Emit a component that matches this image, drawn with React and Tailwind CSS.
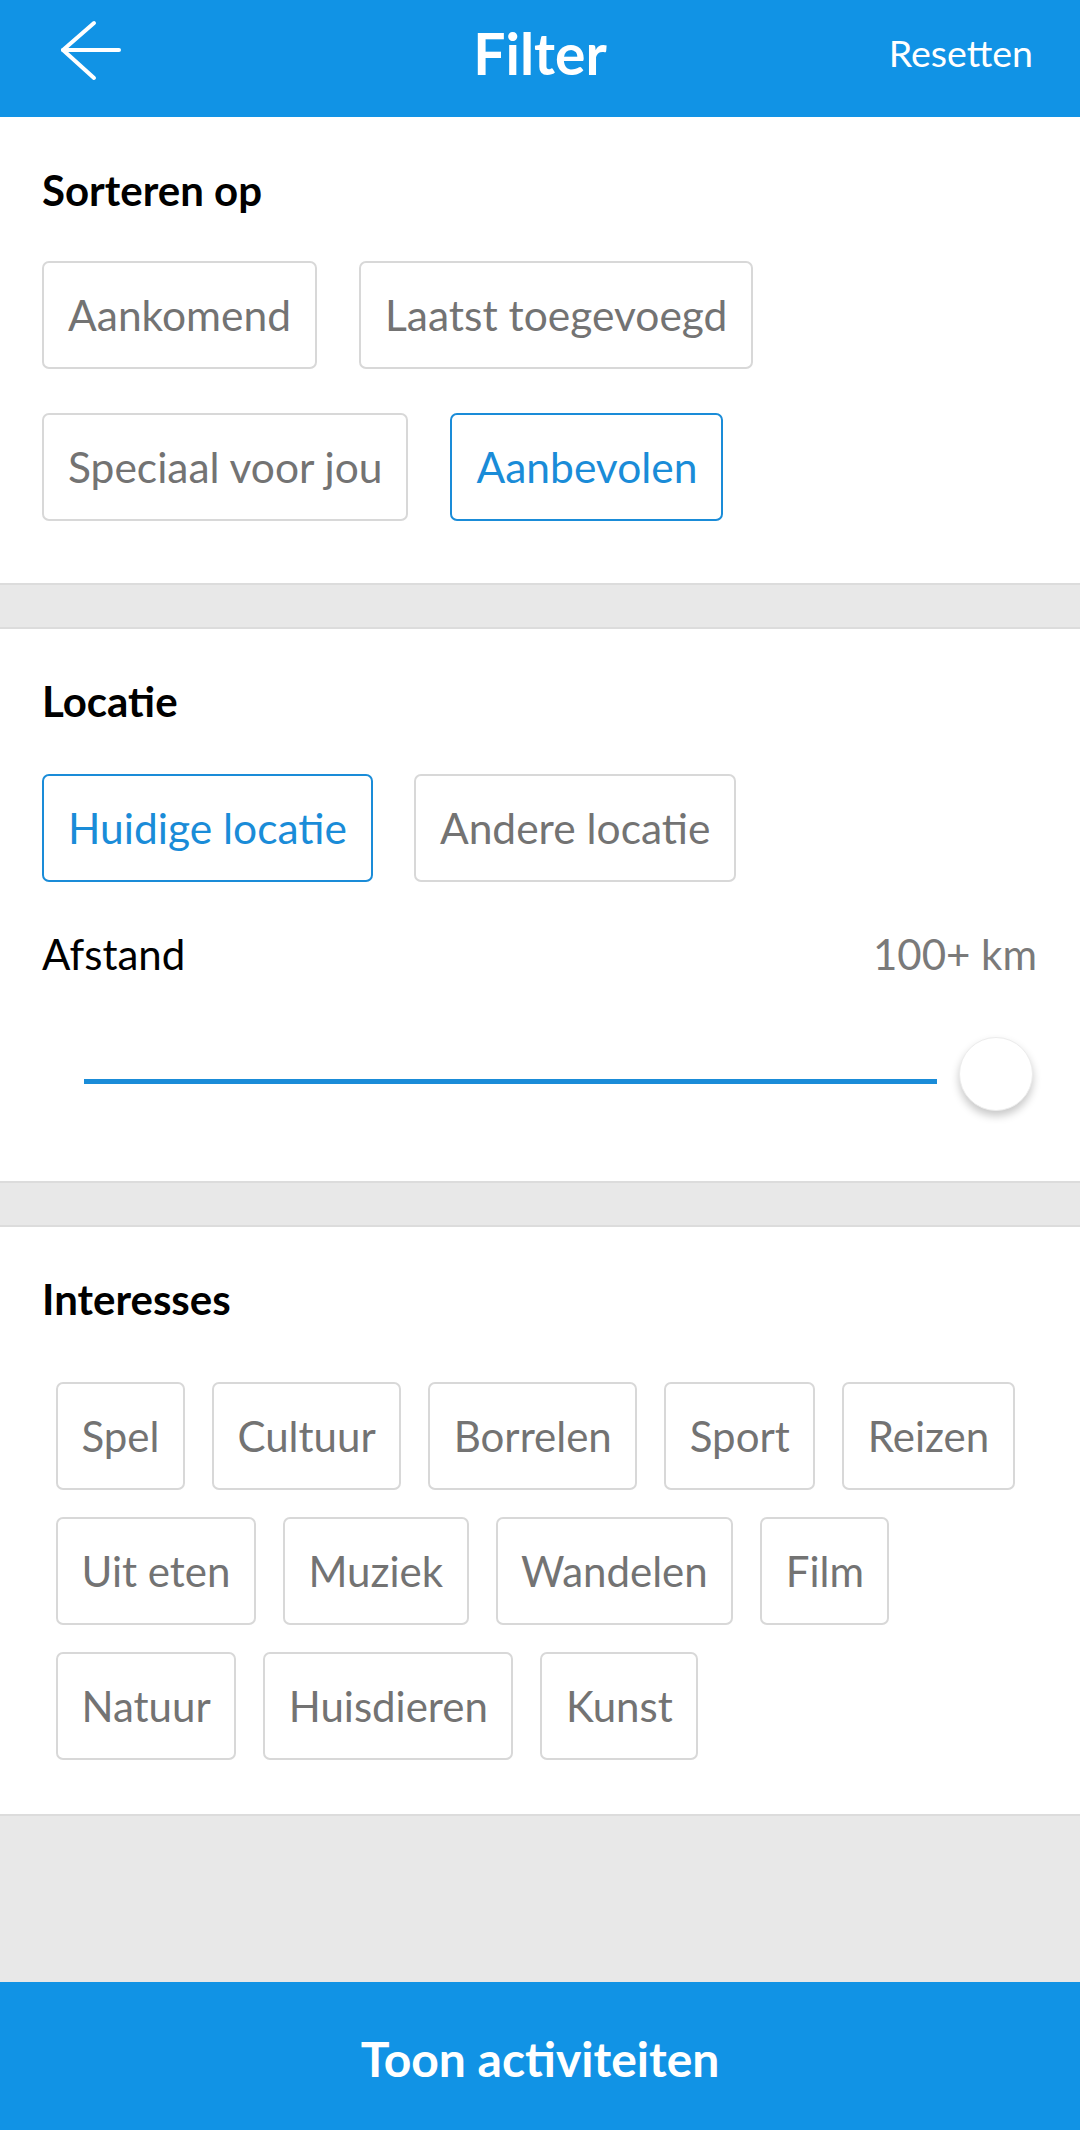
import { useState } from 'react';

const font = { fontFamily: 'Lato, "Open Sans", sans-serif' };

const Chip = ({ label, active, onClick, small }) => (
  <button
    onClick={onClick}
    className={`h-[108px] rounded-[7px] border-2 bg-white flex items-center leading-none ${
      small ? 'px-[23.5px] text-[42px]' : 'px-[24px] text-[42.5px]'
    } ${active ? 'border-[#1a8cd8] text-[#1a8cd8]' : 'border-[#d8d8d8] text-[#737373]'}`}
  >
    {label}
  </button>
);

const Band = () => <div className="h-[46px] shrink-0 bg-[#e8e8e8] border-y-2 border-[#dcdcdc]" />;

const interests = [
  'Spel', 'Cultuur', 'Borrelen', 'Sport', 'Reizen',
  'Uit eten', 'Muziek', 'Wandelen', 'Film',
  'Natuur', 'Huisdieren', 'Kunst',
];

export default function App() {
  const [sort, setSort] = useState('Aanbevolen');
  const [loc, setLoc] = useState('Huidige locatie');
  const [picked, setPicked] = useState([]);

  const toggle = (name) =>
    setPicked((p) => (p.includes(name) ? p.filter((x) => x !== name) : [...p, name]));

  const sortChip = (s) => <Chip key={s} label={s} active={sort === s} onClick={() => setSort(s)} />;

  return (
    <div style={font} className="w-[1080px] h-[2130px] flex flex-col bg-[#e8e8e8]">
      {/* Header */}
      <header className="h-[117px] shrink-0 bg-[#1193e5] relative flex items-center justify-center pb-[10px]">
        <button className="absolute left-[58px] top-[19px] w-[66px] h-[62px] flex items-center justify-center">
          <svg width="66" height="62" viewBox="0 0 66 62" fill="none" stroke="white" strokeWidth="4" strokeLinecap="round" strokeLinejoin="round">
            <path d="M5 31 H61" />
            <path d="M36 4 L5 31 L36 59" />
          </svg>
        </button>
        <h1 className="text-white font-bold text-[57px] leading-none">Filter</h1>
        <button className="absolute right-[47px] top-[34px] text-white text-[37.5px] leading-none">Resetten</button>
      </header>

      {/* Sorteren op */}
      <section className="bg-white pt-[52px] pb-[62px] px-[42px]">
        <h2 className="text-[42px] font-bold leading-none text-black">Sorteren op</h2>
        <div className="mt-[50px] flex flex-col gap-y-[44px]">
          <div className="flex gap-x-[42px]">
            {['Aankomend', 'Laatst toegevoegd'].map(sortChip)}
          </div>
          <div className="flex gap-x-[42px]">
            {['Speciaal voor jou', 'Aanbevolen'].map(sortChip)}
          </div>
        </div>
      </section>

      <Band />

      {/* Locatie */}
      <section className="bg-white pt-[51px] pb-[70px] px-[42px]">
        <h2 className="text-[42px] font-bold leading-none text-black">Locatie</h2>
        <div className="mt-[52px] flex gap-x-[41px]">
          {['Huidige locatie', 'Andere locatie'].map((s) => (
            <Chip key={s} label={s} active={loc === s} onClick={() => setLoc(s)} />
          ))}
        </div>
        <div className="mt-[51px] flex items-center justify-between text-[42px] leading-none">
          <span className="text-black">Afstand</span>
          <span className="text-[#7a7a7a] pr-[1px]">100+ km</span>
        </div>
        <div className="mt-[62px] ml-[42px] flex items-start gap-[22px]">
          <div className="mt-[42px] w-[853px] h-[5px] bg-[#1a8cd8]" />
          <div className="w-[74px] h-[74px] rounded-full bg-white border border-[#ececec] shadow-[0_5px_8px_rgba(0,0,0,0.22)]" />
        </div>
      </section>

      <Band />

      {/* Interesses */}
      <section className="bg-white pt-[51px] pb-[54px] px-[42px]">
        <h2 className="text-[42px] font-bold leading-none text-black">Interesses</h2>
        <div className="mt-[62px] ml-[14px] w-[980px] flex flex-wrap gap-[27px]">
          {interests.map((s) => (
            <Chip key={s} small label={s} active={picked.includes(s)} onClick={() => toggle(s)} />
          ))}
        </div>
      </section>

      <div className="flex-1 border-t-2 border-[#dcdcdc]" />

      <button className="h-[148px] shrink-0 bg-[#1193e5] text-white font-bold text-[48px] leading-none flex items-center justify-center pt-[5px]">
        Toon activiteiten
      </button>
    </div>
  );
}
